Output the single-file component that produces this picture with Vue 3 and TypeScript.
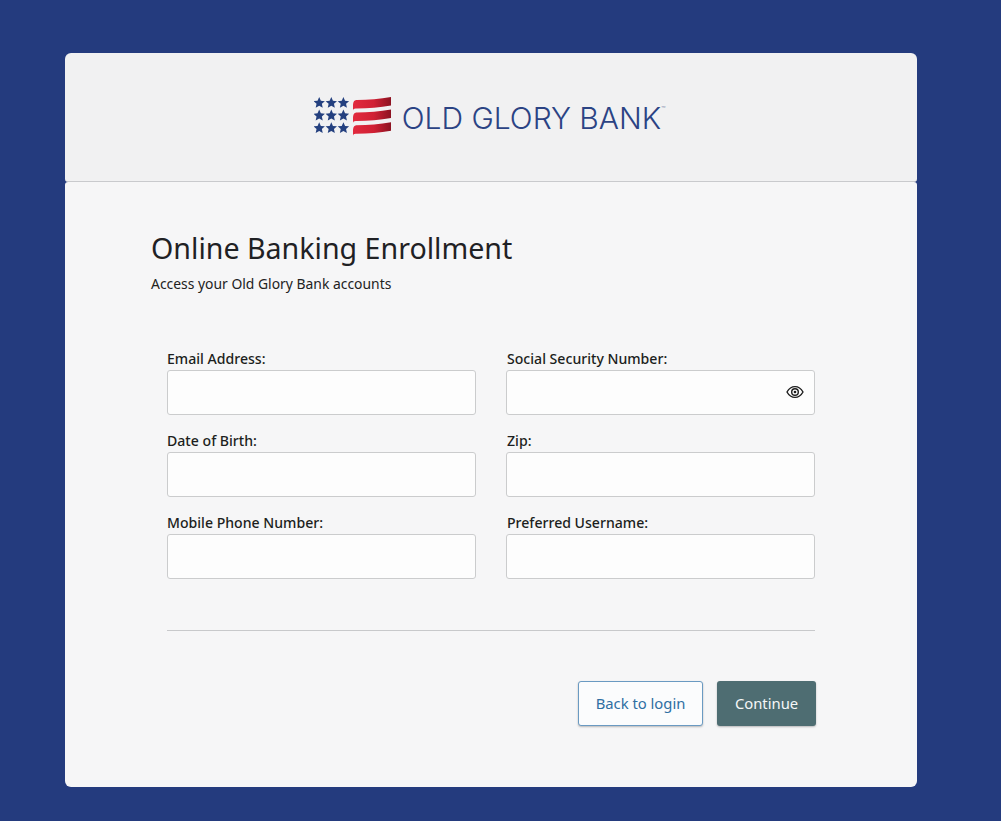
<script setup lang="ts">
const fields: { label: string; eye?: boolean }[] = [
  { label: 'Email Address:' },
  { label: 'Social Security Number:', eye: true },
  { label: 'Date of Birth:' },
  { label: 'Zip:' },
  { label: 'Mobile Phone Number:' },
  { label: 'Preferred Username:' },
]
const stars: [number, number][] = []
for (let r = 0; r < 3; r++) for (let c = 0; c < 3; c++) stars.push([5.2 + c * 12.1, 7 + r * 12.6])
const starPath = (x: number, y: number) => {
  const pts: string[] = []
  for (let i = 0; i < 10; i++) {
    const rad = i % 2 ? 2.8 : 6
    const a = -Math.PI / 2 + (i * Math.PI) / 5
    pts.push(`${(x + rad * Math.cos(a)).toFixed(2)},${(y + rad * Math.sin(a)).toFixed(2)}`)
  }
  return pts.join(' ')
}
const stripes = [0, 12.6, 25.2].map(
  (y) => `M39 ${y + 10}c0-4 1-6 4-6 11 0 23-1 34-3v8.500c-11 2-23 3-34 3-2 0-4 0-4 2.500z`,
)
</script>

<template>
  <div class="page">
    <main class="card">
      <header class="head">
        <div class="logo">
          <svg class="mark" width="78" height="42" viewBox="0 0 78 42">
            <defs>
              <linearGradient id="red" x1="0" x2="1" y1="0" y2="0">
                <stop offset="0" stop-color="#e22a3e" />
                <stop offset="0.55" stop-color="#d02034" />
                <stop offset="1" stop-color="#8c1322" />
              </linearGradient>
            </defs>
            <polygon v-for="(s, i) in stars" :key="i" :points="starPath(s[0], s[1])" fill="#24407f" />
            <path v-for="(d, i) in stripes" :key="'s' + i" :d="d" fill="url(#red)" />
          </svg>
          <span class="brand">OLD GLORY BANK<sup class="tm">™</sup></span>
        </div>
      </header>
      <section class="body">
        <h1 class="title">Online Banking Enrollment</h1>
        <p class="sub">Access your Old Glory Bank accounts</p>
        <form class="grid" @submit.prevent>
          <label v-for="f in fields" :key="f.label" class="field">
            <span class="label">{{ f.label }}</span>
            <span class="box">
              <svg v-if="f.eye" class="eye" width="18" height="14" viewBox="0 0 18 14" fill="none" stroke="#1d1d1d" stroke-width="1.4">
                <path d="M1 7c2-3.6 4.800-5.400 8-5.400S15 3.400 17 7c-2 3.600-4.800 5.400-8 5.400S3 10.600 1 7z" />
                <circle cx="9" cy="7" r="3.300" />
                <circle cx="9" cy="7" r="1.300" fill="#1d1d1d" stroke="none" />
              </svg>
            </span>
          </label>
        </form>
        <hr class="rule" />
        <div class="actions">
          <button type="button" class="btn ghost">Back to login</button>
          <button type="button" class="btn solid">Continue</button>
        </div>
      </section>
    </main>
  </div>
</template>

<style>
html, body { margin: 0; background: #243b7e; }
</style>

<style scoped>
.page {
  width: 1001px;
  height: 821px;
  box-sizing: border-box;
  padding: 53px 84px 34px 65px;
  background: #243b7e;
  font-family: "Noto Sans", "Open Sans", sans-serif;
  overflow: hidden;
}
.card {
  height: 734px;
  display: flex;
  flex-direction: column;
}
.head {
  height: 128px;
  flex: none;
  display: flex;
  align-items: center;
  justify-content: center;
  background: #f1f1f2;
  border-bottom: 1px solid #c9cacd;
  border-radius: 6px 6px 3px 3px;
}
.logo {
  display: flex;
  align-items: center;
  gap: 10px;
}
.mark { display: block; }
.brand {
  font-family: "Inter", sans-serif;
  font-size: 30px;
  font-weight: 300;
  line-height: 40px;
  letter-spacing: 0;
  color: #2b4384;
  white-space: nowrap;
  position: relative;
  padding-right: 7px;
  top: 1px;
}
.tm {
  position: absolute;
  font-size: 7px;
  line-height: 1;
  top: 8px;
  color: #6d7a9e;
}
.body {
  flex: 1;
  padding: 46px 102px 0 86px;
  color: #1d1f21;
  background: #f6f6f7;
  border-radius: 3px 3px 6px 6px;
}
.title {
  margin: 0;
  font-size: 28.6px;
  line-height: 40px;
  font-weight: 400;
  color: #1f2124;
}
.sub {
  margin: 6px 0 0;
  font-size: 13.9px;
  line-height: 20px;
  color: #222;
}
.grid {
  margin: 56px 0 0 16px;
  display: grid;
  grid-template-columns: 309px 309px;
  column-gap: 30px;
  row-gap: 17px;
}
.field { display: block; }
.label {
  display: block;
  margin-bottom: 2px;
  padding-left: 0;
  font-size: 14.1px;
  line-height: 18px;
  font-weight: 500;
  color: #1c1e20;
}
.field:nth-child(even) .label { padding-left: 1px; }
.box {
  display: flex;
  align-items: center;
  justify-content: flex-end;
  height: 45px;
  box-sizing: border-box;
  padding: 0 10px 2px 0;
  background: #fdfdfd;
  border: 1px solid #cbcccd;
  border-radius: 3px;
}
.rule {
  margin: 51px 0 0 16px;
  width: 648px;
  height: 1px;
  border: 0;
  background: #c8c9cb;
}
.actions {
  display: flex;
  justify-content: flex-end;
  gap: 14px;
  margin-top: 50px;
  width: 665px;
}
.btn {
  height: 45px;
  padding: 0 0 2px;
  border-radius: 3px;
  font-family: inherit;
  font-size: 14.8px;
  box-shadow: 0 1px 2px rgba(0, 0, 0, 0.25);
}
.ghost {
  width: 125px;
  background: #fbfcfd;
  border: 1.5px solid #6a9ac2;
  color: #2f6fa3;
}
.solid {
  width: 99px;
  background: #4e6d72;
  border: 0;
  color: #f5f7f7;
}
</style>
